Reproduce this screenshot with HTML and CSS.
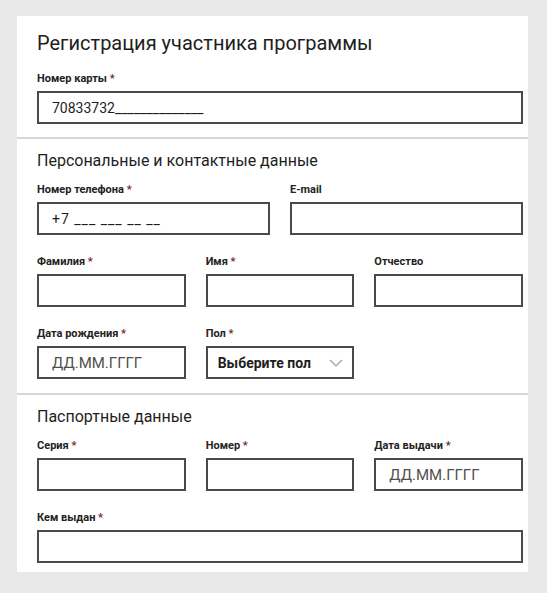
FILE: index.html
```html
<!DOCTYPE html>
<html lang="ru">
<head>
  <meta charset="UTF-8" />
  <meta name="viewport" content="width=device-width, initial-scale=1.0"/>
  <title>Регистрация участника программы</title>
  <link rel="stylesheet" href="styles.css">
</head>
<body>

  <div class="form-card">
    <!-- Card number -->
    <div class="section">
      <h1 class="form-title">Регистрация участника программы</h1>
      <div class="field">
        <label for="card">Номер карты <span class="req">*</span></label>
        <input type="text" id="card" class="masked" value="70833732______________" />
      </div>
    </div>

    <!-- Personal and contact details -->
    <div class="section">
      <h2>Персональные и контактные данные</h2>
      <div class="row cols-2">
        <div class="field">
          <label for="phone">Номер телефона <span class="req">*</span></label>
          <input type="text" id="phone" class="masked phone" value="+7 ___ ___ __ __" />
        </div>
        <div class="field">
          <label for="email">E-mail</label>
          <input type="text" id="email" />
        </div>
      </div>
      <div class="row cols-3">
        <div class="field">
          <label for="lastName">Фамилия <span class="req">*</span></label>
          <input type="text" id="lastName" />
        </div>
        <div class="field">
          <label for="firstName">Имя <span class="req">*</span></label>
          <input type="text" id="firstName" />
        </div>
        <div class="field">
          <label for="middleName">Отчество</label>
          <input type="text" id="middleName" />
        </div>
      </div>
      <div class="row cols-3">
        <div class="field">
          <label for="birthDate">Дата рождения <span class="req">*</span></label>
          <input type="text" id="birthDate" placeholder="ДД.ММ.ГГГГ" />
        </div>
        <div class="field">
          <label for="gender">Пол <span class="req">*</span></label>
          <div class="select-wrap">
            <select id="gender">
              <option>Выберите пол</option>
              <option>Мужской</option>
              <option>Женский</option>
            </select>
            <svg class="chevron" width="14" height="8" viewBox="0 0 14 8">
              <path d="M1 1 L7 7 L13 1" fill="none" stroke="#9a9a9a" stroke-width="1.2"/>
            </svg>
          </div>
        </div>
      </div>
    </div>

    <!-- Passport details -->
    <div class="section">
      <h2>Паспортные данные</h2>
      <div class="row cols-3">
        <div class="field">
          <label for="series">Серия <span class="req">*</span></label>
          <input type="text" id="series" />
        </div>
        <div class="field">
          <label for="number">Номер <span class="req">*</span></label>
          <input type="text" id="number" />
        </div>
        <div class="field">
          <label for="issueDate">Дата выдачи <span class="req">*</span></label>
          <input type="text" id="issueDate" placeholder="ДД.ММ.ГГГГ" />
        </div>
      </div>
      <div class="row">
        <div class="field">
          <label for="issuedBy">Кем выдан <span class="req">*</span></label>
          <input type="text" id="issuedBy" />
        </div>
      </div>
    </div>
  </div>

</body>
</html>
```

FILE: styles.css
```css
:root {
  --bg-page: #e9e9e9;
  --white: #ffffff;
  --text-dark: #1e1e1e;
  --border-dark: #4a4a4a;
  --divider: #d6d6d6;
  --required: #7a1f2b;
  --placeholder: #4f4f4f;
}

* {
  box-sizing: border-box;
  margin: 0;
  padding: 0;
}

body {
  font-family: Roboto, 'Noto Sans', sans-serif;
  background-color: var(--bg-page);
  color: var(--text-dark);
  padding: 16px 19px 0 17px;
}

.form-card {
  background-color: var(--white);
  width: 511px;
}

.section {
  padding: 12px 5px 14px 20px;
  border-top: 2px solid var(--divider);
}

.section:first-child {
  border-top: none;
  padding-top: 15px;
  padding-bottom: 13px;
}

.section:last-child {
  padding-bottom: 9px;
}

.form-title {
  font-size: 20px;
  font-weight: 400;
  line-height: 24px;
  margin-bottom: 17px;
}

.section h2 {
  font-size: 16px;
  font-weight: 400;
  line-height: 20px;
  margin-bottom: 12px;
}

.row {
  display: grid;
  grid-template-columns: 1fr;
  column-gap: 20px;
  margin-top: 20px;
}

.section h2 + .row {
  margin-top: 0;
}

.cols-2 {
  grid-template-columns: repeat(2, 1fr);
}

.cols-3 {
  grid-template-columns: repeat(3, 1fr);
}

.field label {
  display: block;
  font-size: 11px;
  font-weight: 700;
  line-height: 14px;
  margin-bottom: 5px;
  color: #222;
}

.req {
  color: var(--required);
}

input[type="text"],
select {
  width: 100%;
  height: 33px;
  border: 2px solid var(--border-dark);
  border-radius: 0;
  background: var(--white);
  font-family: Roboto, sans-serif;
  font-size: 14px;
  color: var(--text-dark);
  padding: 0 13px;
  outline: none;
}

input::placeholder {
  color: var(--placeholder);
  font-size: 15px;
  font-weight: 400;
}

.masked.phone {
  letter-spacing: 1px;
}

.select-wrap {
  position: relative;
}

select {
  appearance: none;
  -webkit-appearance: none;
  font-weight: 700;
  padding-left: 10px;
}

.chevron {
  position: absolute;
  right: 11px;
  top: 13px;
  pointer-events: none;
}
```
